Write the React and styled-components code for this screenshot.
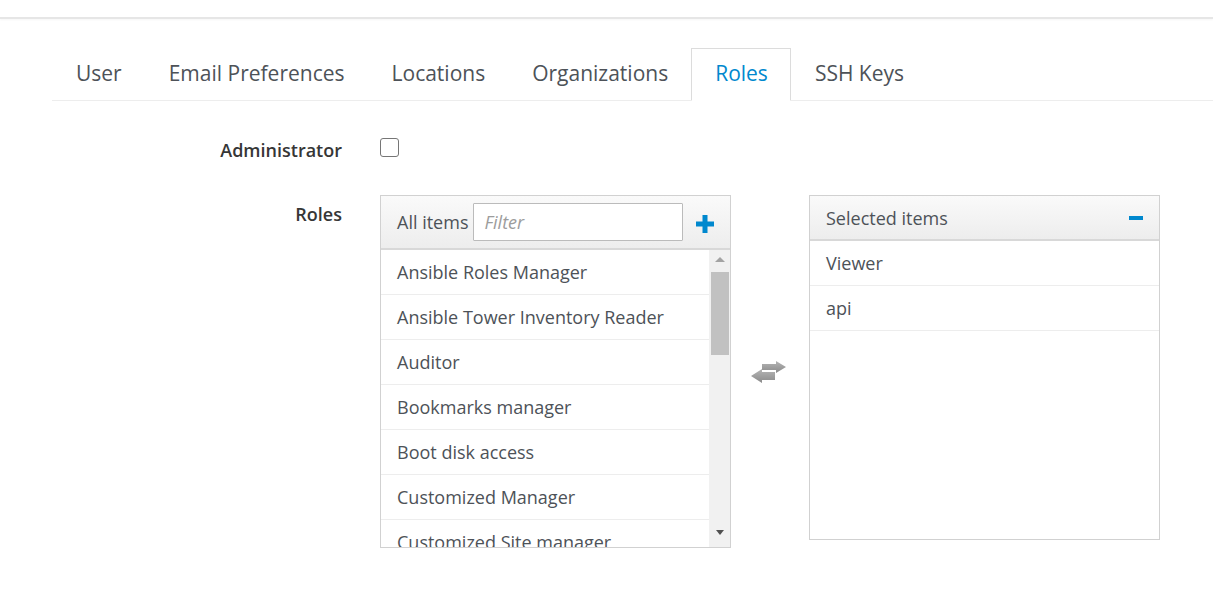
import React from "react";
import styled, { createGlobalStyle } from "styled-components";

const GlobalStyle = createGlobalStyle`
  html, body { margin: 0; padding: 0; background: #fff; }
  body { font-family: "Open Sans", "Liberation Sans", sans-serif; color: #363636; }
  * { box-sizing: border-box; }
`;

const TopBar = styled.div`
  height: 19px;
  border-bottom: 2px solid #e6e6e6;
  box-shadow: 0 1px 2px rgba(0,0,0,0.04);
`;

const Page = styled.div`
  padding: 29px 0 0 52px;
`;

const Tabs = styled.ul`
  display: flex;
  list-style: none;
  margin: 0;
  padding: 0;
  border-bottom: 1px solid #ededed;
`;

const Tab = styled.li`
  height: 53px;
  margin-bottom: -1px;
  padding: 0 22px 4px 23px;
  display: flex;
  align-items: center;
  font-size: 21px;
  color: ${p => (p.$active ? "#0088ce" : "#4d5258")};
  background: ${p => (p.$active ? "#fff" : "transparent")};
  border: 1px solid ${p => (p.$active ? "#dcdcdc" : "transparent")};
  border-bottom-color: ${p => (p.$active ? "#fff" : "transparent")};
`;

const Form = styled.div`
  display: flex;
  flex-direction: column;
`;

const FormRow = styled.div`
  display: flex;
  align-items: flex-start;
  margin-top: ${p => p.$mt}px;
`;

const Label = styled.label`
  width: 290px;
  margin-right: 38px;
  text-align: right;
  font-weight: 600;
  font-size: 18px;
  line-height: 24px;
  color: #363636;
  padding-top: ${p => p.$pt || 0}px;
`;

const Checkbox = styled.span`
  display: block;
  width: 19px;
  height: 19px;
  border: 1px solid #767676;
  border-radius: 3px;
  background: #fff;
`;

const DualList = styled.div`
  display: flex;
  align-items: flex-start;
`;

const Panel = styled.div`
  width: 351px;
  height: ${p => p.$h}px;
  border: 1px solid #d1d1d1;
  display: flex;
  flex-direction: column;
  overflow: hidden;
  background: #fff;
`;

const PanelHeader = styled.div`
  height: ${p => p.$h}px;
  flex: none;
  display: flex;
  align-items: center;
  padding: 0 16px 0 16px;
  background: linear-gradient(to bottom, #fafafa 0%, #ededed 100%);
  border-bottom: 2px solid #d8d8d8;
  font-size: 18px;
  color: #4d5258;
`;

const HeaderTitle = styled.span`
  flex: ${p => (p.$grow ? 1 : "none")};
`;

const FilterInput = styled.input`
  width: 210px;
  height: 38px;
  margin-left: 5px;
  border: 1px solid #bbb;
  border-radius: 1px;
  padding: 0 10px;
  font-family: inherit;
  font-size: 18px;
  color: #363636;
  background: #fff;
  &::placeholder { font-style: italic; color: #9c9c9c; }
`;

const IconButton = styled.span`
  display: flex;
  align-items: center;
  justify-content: center;
  margin-left: ${p => p.$ml || 0}px;
  margin-top: ${p => p.$mt || 0}px;
`;

const ListArea = styled.div`
  flex: 1;
  display: flex;
  min-height: 0;
`;

const Items = styled.ul`
  flex: 1;
  list-style: none;
  margin: 0;
  padding: 0;
  overflow: hidden;
`;

const Item = styled.li`
  height: 45px;
  display: flex;
  align-items: center;
  padding-left: 16px;
  font-size: 18px;
  color: #4d5258;
  border-bottom: 1px solid #ededed;
  white-space: nowrap;
`;

const ScrollTrack = styled.div`
  width: 21px;
  flex: none;
  background: #f1f1f1;
  display: flex;
  flex-direction: column;
  align-items: center;
  padding-top: 7px;
`;

const Thumb = styled.div`
  width: 18px;
  height: 83px;
  background: #c1c1c1;
  margin-top: 10px;
`;

const ArrowSpacer = styled.div`
  flex: 1;
`;

const TriUp = styled.div`
  width: 0; height: 0;
  border-left: 5px solid transparent;
  border-right: 5px solid transparent;
  border-bottom: 5px solid #a3a3a3;
`;

const TriDown = styled.div`
  width: 0; height: 0;
  border-left: 4px solid transparent;
  border-right: 4px solid transparent;
  border-top: 5px solid #505050;
  margin-bottom: 12px;
`;

const Middle = styled.div`
  width: 78px;
  display: flex;
  justify-content: center;
  padding-top: 166px;
  padding-right: 3px;
`;

const Plus = () => (
  <svg width="18" height="18" viewBox="0 0 18 18">
    <rect x="6.5" y="0" width="5" height="18" fill="#0088ce" />
    <rect x="0" y="6.5" width="18" height="5" fill="#0088ce" />
  </svg>
);

const Minus = () => (
  <svg width="14" height="4" viewBox="0 0 14 4">
    <rect x="0" y="0" width="14" height="4" fill="#0088ce" />
  </svg>
);

const Exchange = () => (
  <svg width="36" height="24" viewBox="0 0 36 24">
    <defs>
      <linearGradient id="ag" x1="0" y1="0" x2="0" y2="1">
        <stop offset="0" stopColor="#b5b5b5" />
        <stop offset="1" stopColor="#8a8a8a" />
      </linearGradient>
    </defs>
    <polygon points="11,3 25,3 25,0 35,6 25,12 25,9 11,9" fill="url(#ag)" />
    <polygon points="24,11 11,11 11,8 0,15 11,22 11,19 24,19" fill="url(#ag)" />
  </svg>
);

const tabs = ["User", "Email Preferences", "Locations", "Organizations", "Roles", "SSH Keys"];
const allItems = [
  "Ansible Roles Manager",
  "Ansible Tower Inventory Reader",
  "Auditor",
  "Bookmarks manager",
  "Boot disk access",
  "Customized Manager",
  "Customized Site manager",
];
const selected = ["Viewer", "api"];

export default function App() {
  return (
    <>
      <GlobalStyle />
      <TopBar />
      <Page>
        <Tabs>
          {tabs.map(t => (
            <Tab key={t} $active={t === "Roles"}>{t}</Tab>
          ))}
        </Tabs>
        <Form>
          <FormRow $mt={37}>
            <Label $pt={0}>Administrator</Label>
            <Checkbox />
          </FormRow>
          <FormRow $mt={33}>
            <Label $pt={7}>Roles</Label>
            <DualList>
              <Panel $h={353}>
                <PanelHeader $h={54}>
                  <HeaderTitle>All items</HeaderTitle>
                  <FilterInput placeholder="Filter" />
                  <IconButton $ml={13} $mt={4}><Plus /></IconButton>
                </PanelHeader>
                <ListArea>
                  <Items>
                    {allItems.map(i => <Item key={i}>{i}</Item>)}
                  </Items>
                  <ScrollTrack>
                    <TriUp />
                    <Thumb />
                    <ArrowSpacer />
                    <TriDown />
                  </ScrollTrack>
                </ListArea>
              </Panel>
              <Middle><Exchange /></Middle>
              <Panel $h={345}>
                <PanelHeader $h={45}>
                  <HeaderTitle $grow>Selected items</HeaderTitle>
                  <IconButton><Minus /></IconButton>
                </PanelHeader>
                <Items>
                  {selected.map(i => <Item key={i}>{i}</Item>)}
                </Items>
              </Panel>
            </DualList>
          </FormRow>
        </Form>
      </Page>
    </>
  );
}
